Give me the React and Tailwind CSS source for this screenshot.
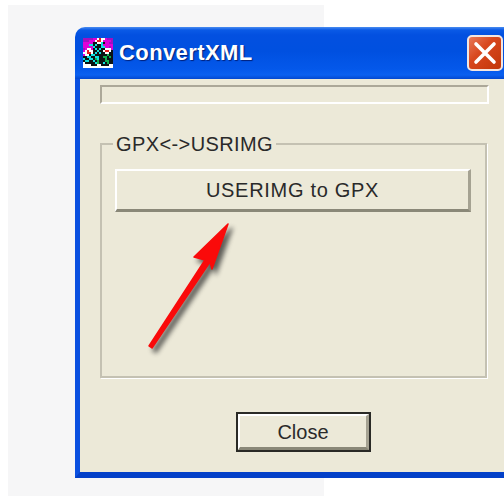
const palette = {
  P: "#a010c0",
  M: "#e000d8",
  W: "#ffffff",
  R: "#e82020",
  C: "#10e0e0",
  K: "#0c1414",
  G: "#10b050",
};

const iconRows = [
  "PPPPPMMWRWWMPPP",
  "PPPMMMWRRWMMMMP",
  "MMMMMKKWWCKMMPP",
  "MMMCCKCKKCMMMMM",
  "MMMMMCKKKCCMMPM",
  "PMWWMKCKCKKWWWM",
  "MWRWWKKCKKWRRWK",
  "WWRRWKCKCKKWWKK",
  "MWWKCCKKKKKKGKK",
  "KKCCKKCCKKGGKGK",
  "CKKCCKGCKKKGKKK",
  "KCCKKCKGKKKGGKK",
  "WKKKKKCGKKCKGKK",
  "WWWWKKKWWKKKKWW",
  "WWWWWWWWWWWWWWW",
];

function AppIcon() {
  return (
    <svg width="30" height="30" viewBox="0 0 15 15" shapeRendering="crispEdges" className="shrink-0 blur-[0.4px]">
      {iconRows.flatMap((row, y) =>
        [...row].map((c, x) => (
          <rect key={`${x}-${y}`} x={x} y={y} width="1" height="1" fill={palette[c]} />
        ))
      )}
    </svg>
  );
}

// Red annotation arrow with its soft drop shadow
function Arrow() {
  const shape = "228,224 194,257 205,260 149,346 152,348 210,262 212,269";
  return (
    <svg
      width="504"
      height="496"
      viewBox="0 0 504 496"
      className="absolute left-0 top-0 pointer-events-none"
    >
      <polygon points={shape} fill="#222" stroke="#222" strokeWidth="2" transform="translate(4 4)" className="blur-[2.5px] opacity-70" />
      <polygon points={shape} fill="#fa0a0a" stroke="#fa0a0a" strokeWidth="1.5" strokeLinejoin="round" />
    </svg>
  );
}

function XPButton({ children, className }) {
  return (
    <button
      className={`flex items-center justify-center bg-[#ece9d8] text-[#2a2a2a] text-[20px] font-['Liberation_Sans',sans-serif] border-t-2 border-l-2 border-b-[3px] border-r-[3px] border-t-white border-l-white border-b-[#8a8878] border-r-[#a5a292] ${className}`}
    >
      {children}
    </button>
  );
}

export default function App() {
  return (
    <div className="relative w-[504px] h-[496px] bg-white overflow-hidden font-['Liberation_Sans',sans-serif]">
      <div className="ml-2 mt-[5px] w-[316px] h-[491px] bg-[#f6f6f7] pl-[67px] pt-[22px]">
        <div className="w-[429px] h-[451px] flex flex-col">
          <div className="h-[52px] shrink-0 rounded-tl-[10px] flex items-center pl-[8px] pr-[1px] bg-[linear-gradient(to_bottom,#4a8cf0_0px,#0a5ae6_3px,#0350e0_8px,#0050e0_24px,#0458ea_42px,#0a60f0_48px,#0348d0_52px)]">
            <AppIcon />
            <span className="ml-[6px] text-white font-bold text-[22px] leading-none tracking-[0.4px] [text-shadow:1px_1px_1px_#00207a]">
              ConvertXML
            </span>
            <div className="ml-auto w-[36px] h-[36px] rounded-[5px] border-2 border-[#f4e6e0] flex items-center justify-center bg-[linear-gradient(135deg,#e8795a,#d8481f_40%,#c23608)]">
              <svg width="26" height="26" viewBox="0 0 26 26">
                <path d="M4 4L22 22M22 4L4 22" stroke="#fff" strokeWidth="3.6" strokeLinecap="round" />
              </svg>
            </div>
          </div>
          <div className="flex-1 flex flex-col border-l-[5px] border-b-[6px] border-l-[#0a50e0] border-b-[#0340c8] bg-[#ece9d8] pl-[20px] pt-[6px] pb-[20px]">
            <div className="w-[389px] h-[19px] shrink-0 border-2 border-t-[#aca899] border-l-[#aca899] border-b-white border-r-white" />
            <fieldset className="mt-[29px] w-[387px] h-[245px] shrink-0 border-2 border-[#c4c1b2] px-[13px] shadow-[1px_1px_0_#fff] text-[#2a2a2a]">
              <legend className="-ml-[2px] px-[3px] leading-[22px] text-[20px] tracking-[0.4px]">GPX&lt;-&gt;USRIMG</legend>
              <XPButton className="w-[356px] h-[43px] mt-[14px] tracking-[0.7px]">USERIMG to GPX</XPButton>
            </fieldset>
            <div className="mt-[34px] ml-[136px] w-[135px] h-[40px] border-2 border-[#2a2a26]">
              <XPButton className="w-full h-full">Close</XPButton>
            </div>
          </div>
        </div>
      </div>
      <Arrow />
    </div>
  );
}
